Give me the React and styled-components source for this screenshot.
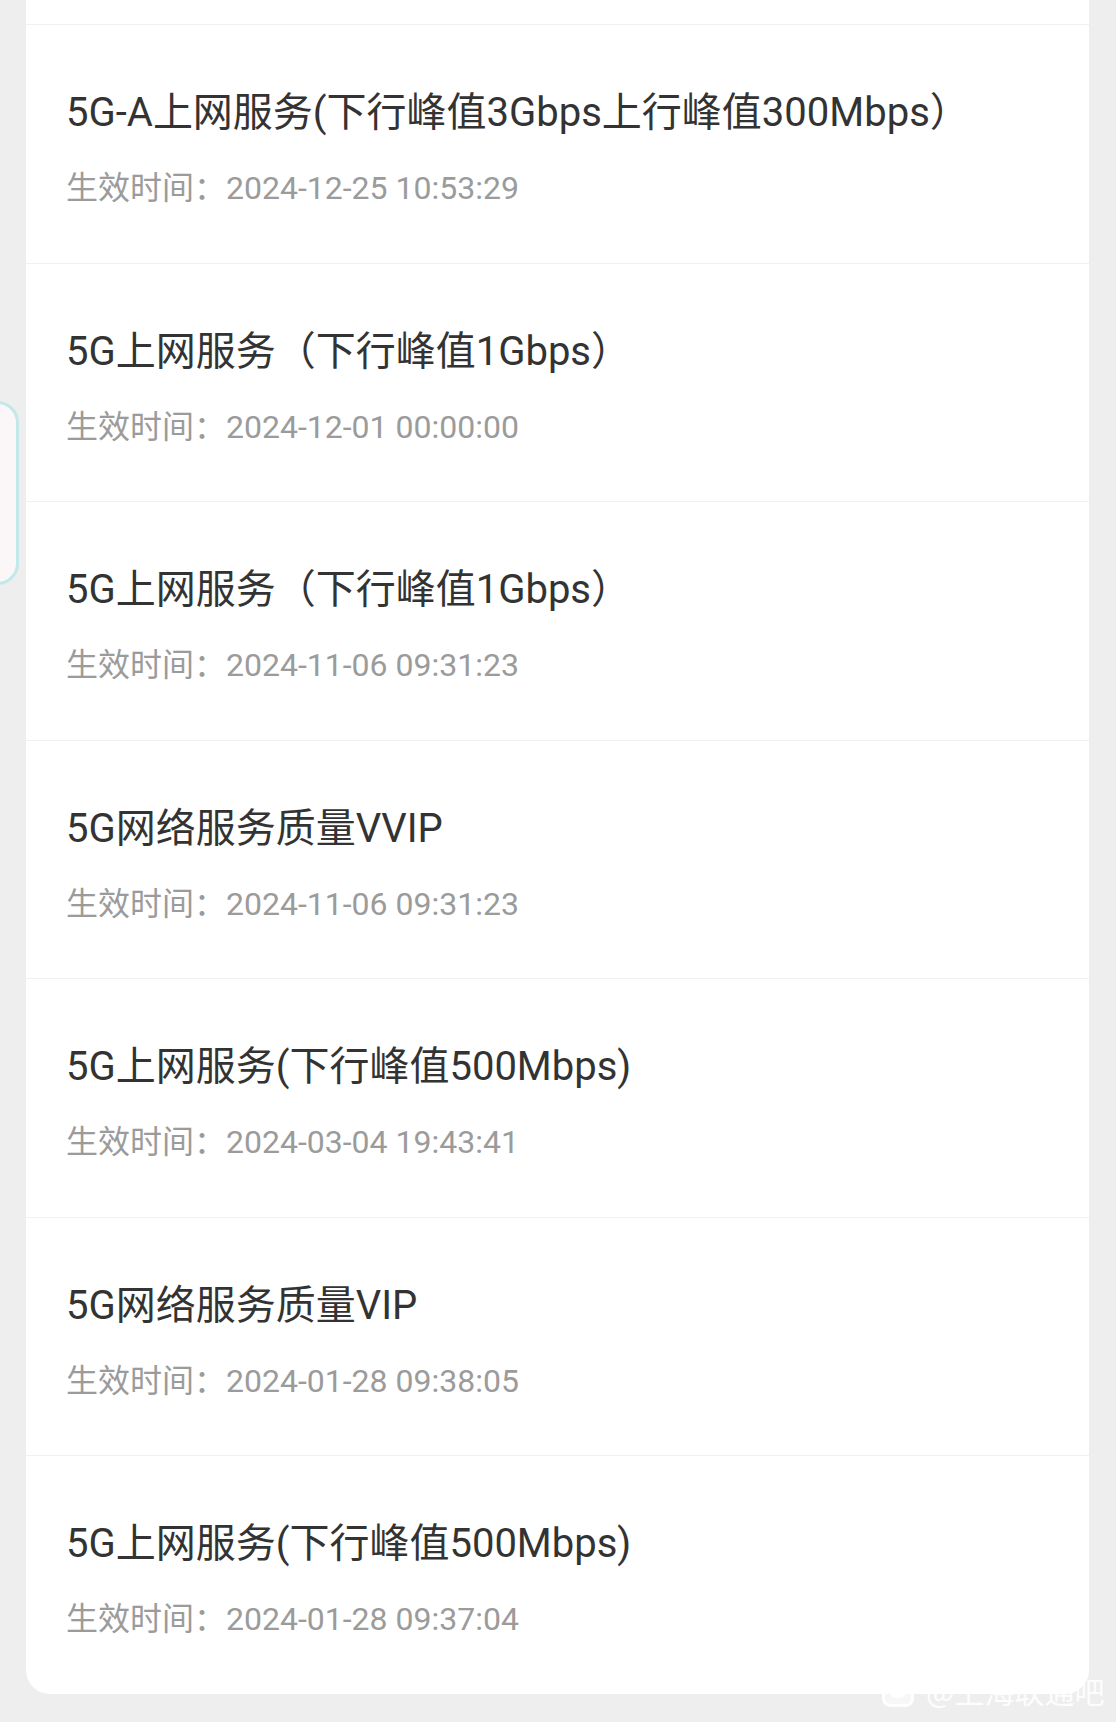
import React from "react";
import styled, { createGlobalStyle } from "styled-components";

const GlobalStyle = createGlobalStyle`
  html, body {
    margin: 0;
    padding: 0;
    background: #eeeeee;
  }
  body {
    font-family: Roboto, "Noto Sans CJK SC", sans-serif;
  }
`;

const Page = styled.div`
  position: relative;
  min-height: 1722px;
  padding: 0 27px 0 26px;
  box-sizing: border-box;
  overflow: hidden;
`;

const Card = styled.div`
  background: #ffffff;
  border-radius: 0 0 24px 24px;
  display: flex;
  flex-direction: column;
`;

const PrevTail = styled.div`
  height: 24px;
`;

const Row = styled.div`
  border-top: 1px solid #f1f1f1;
  padding: 62px 40px 53.5px 40px;
  display: flex;
  flex-direction: column;
  gap: 29px;
`;

const Title = styled.div`
  font-family: Roboto, "Noto Sans CJK SC", sans-serif;
  font-size: 40px;
  line-height: 51px;
  color: #333333;
  white-space: nowrap;
`;

const Meta = styled.div`
  font-family: Roboto, "Noto Sans CJK SC", sans-serif;
  font-size: 32px;
  line-height: 42px;
  color: #9b9b9b;
  white-space: nowrap;
`;

const SideTab = styled.div`
  position: absolute;
  left: -24px;
  top: 401px;
  width: 37px;
  height: 178px;
  border: 3px solid #c3e8ea;
  border-radius: 24px;
  background: #fbf7f9;
`;

const Watermark = styled.div`
  position: absolute;
  left: 882px;
  top: 1672px;
  display: flex;
  align-items: center;
  gap: 12px;
  color: rgba(255, 255, 255, 0.92);
  font-family: "Noto Sans CJK SC", sans-serif;
  font-size: 30px;
  line-height: 36px;
`;

const items = [
  { title: "5G-A上网服务(下行峰值3Gbps上行峰值300Mbps）", time: "2024-12-25 10:53:29" },
  { title: "5G上网服务（下行峰值1Gbps）", time: "2024-12-01 00:00:00" },
  { title: "5G上网服务（下行峰值1Gbps）", time: "2024-11-06 09:31:23" },
  { title: "5G网络服务质量VVIP", time: "2024-11-06 09:31:23" },
  { title: "5G上网服务(下行峰值500Mbps)", time: "2024-03-04 19:43:41" },
  { title: "5G网络服务质量VIP", time: "2024-01-28 09:38:05" },
  { title: "5G上网服务(下行峰值500Mbps)", time: "2024-01-28 09:37:04" },
];

const TiebaIcon = () => (
  <svg width="32" height="34" viewBox="0 0 32 34">
    <rect x="1.5" y="1.5" width="29" height="31" rx="7" fill="rgba(255,255,255,0.55)" stroke="rgba(255,255,255,0.95)" strokeWidth="3" />
    <ellipse cx="10" cy="12" rx="2.6" ry="3.4" fill="rgba(255,255,255,0.95)" />
    <ellipse cx="16" cy="10" rx="2.6" ry="3.4" fill="rgba(255,255,255,0.95)" />
    <ellipse cx="22" cy="12" rx="2.6" ry="3.4" fill="rgba(255,255,255,0.95)" />
    <path d="M9 22 C10 16, 22 16, 23 22 C23 26, 9 26, 9 22 Z" fill="rgba(255,255,255,0.95)" />
  </svg>
);

export default function App() {
  return (
    <>
      <GlobalStyle />
      <Page>
        <SideTab />
        <Card>
          <PrevTail />
          {items.map((it, i) => (
            <Row key={i}>
              <Title>{it.title}</Title>
              <Meta>生效时间：{it.time}</Meta>
            </Row>
          ))}
        </Card>
        <Watermark>
          <TiebaIcon />
          <span>@上海联通吧</span>
        </Watermark>
      </Page>
    </>
  );
}
